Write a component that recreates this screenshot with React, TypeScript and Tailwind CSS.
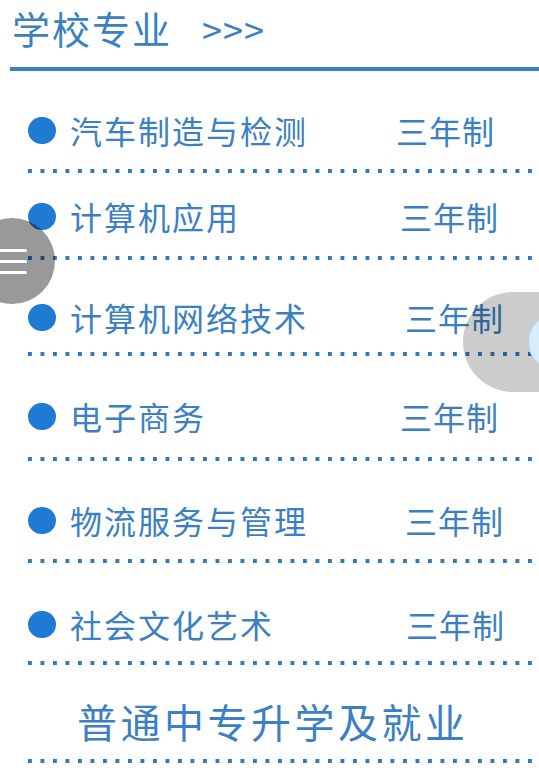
import React from 'react';

const rows = [
  { name: '汽车制造与检测', mt: 'mt-[39px]', dmt: 'mt-[19px]', yr: 'pl-0' },
  { name: '计算机应用', mt: 'mt-[23px]', dmt: 'mt-[20px]', yr: 'pl-[4px]' },
  { name: '计算机网络技术', mt: 'mt-[37px]', dmt: 'mt-[15px]', yr: 'pl-[9px]' },
  { name: '电子商务', mt: 'mt-[40px]', dmt: 'mt-[21px]', yr: 'pl-[4px]' },
  { name: '物流服务与管理', mt: 'mt-[39px]', dmt: 'mt-[19px]', yr: 'pl-[9px]' },
  { name: '社会文化艺术', mt: 'mt-[41px]', dmt: 'mt-[17px]', yr: 'pl-[10px]' },
];

const Dots = ({ className }: { className: string }) => (
  <div
    className={`ml-[28px] h-[4px] bg-[linear-gradient(to_right,#2f78bd_0_4px,transparent_4px)] bg-[length:12.5px_4px] bg-repeat-x ${className}`}
  />
);

export default function App() {
  return (
    <div className="relative w-[539px] h-[777px] overflow-hidden bg-white text-[#3b80c2] font-['Noto_Sans_CJK_SC','Noto_Sans',sans-serif]">
      {/* header */}
      <div className="h-[60px] pl-[12px] pb-[4px] flex items-center">
        <span className="text-[38px] leading-[44px] tracking-[2px]">学校专业</span>
        <span className="ml-[30px] text-[36px] leading-[44px] tracking-[1px]">&gt;&gt;&gt;</span>
      </div>
      <div className="ml-[10px] mt-[7px] h-[4px] bg-[#3a82c5]" />

      {rows.map((r) => (
        <div key={r.name}>
          <div className={`${r.mt} h-[40px] flex items-center pl-[28px]`}>
            <span className="w-[28px] h-[27px] rounded-full bg-[#1f7ad4] shrink-0" />
            <span className="ml-[14px] w-[326px] text-[32px] leading-[40px] tracking-[2px] whitespace-nowrap">{r.name}</span>
            <span className={`${r.yr} text-[32px] leading-[40px] tracking-[1px] whitespace-nowrap`}>三年制</span>
          </div>
          <Dots className={r.dmt} />
        </div>
      ))}

      <div className="mt-[34px] h-[44px] pl-[77px] flex items-center">
        <span className="text-[40px] leading-[44px] tracking-[3.5px] whitespace-nowrap">普通中专升学及就业</span>
      </div>
      <Dots className="mt-[16px]" />

      {/* floating menu button */}
      <div className="absolute left-[-31px] top-[218px] w-[86px] h-[86px] rounded-full bg-black/40 flex flex-col justify-center gap-[8px] pl-[29px]">
        <span className="block w-[29px] h-[3px] bg-white rounded" />
        <span className="block w-[29px] h-[3px] bg-white rounded" />
        <span className="block w-[29px] h-[3px] bg-white rounded" />
      </div>

      {/* floating right pill */}
      <div className="absolute left-[463px] top-[292px] w-[120px] h-[100px] rounded-l-full bg-black/20">
        <div className="absolute left-[65px] top-[20px] w-[60px] h-[60px] rounded-full bg-[#d8edfb] border border-[#a9d4f2]" />
      </div>
    </div>
  );
}
